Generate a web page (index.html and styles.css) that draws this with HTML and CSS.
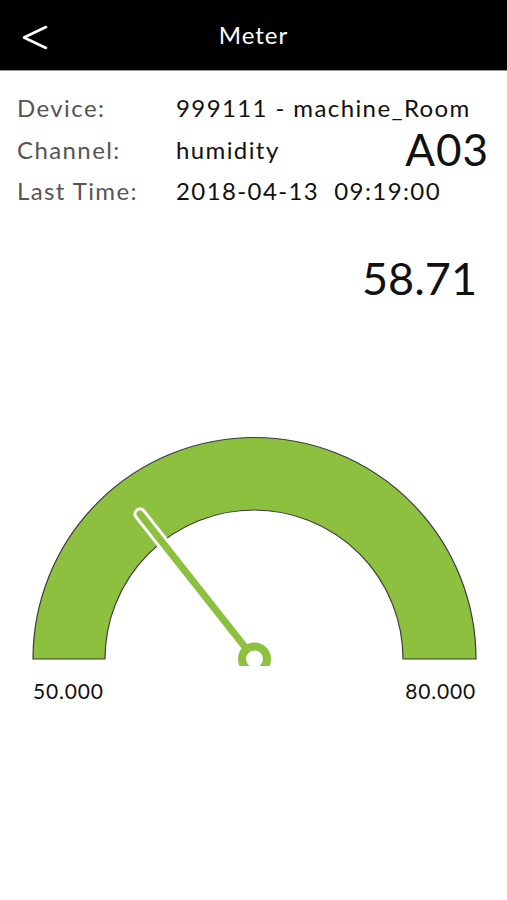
FILE: index.html
```html
<!DOCTYPE html>
<html>
<head>
<meta charset="utf-8">
<link rel="stylesheet" href="styles.css">
</head>
<body>
<header class="topbar">
  <svg class="back" width="30" height="30" viewBox="0 0 30 30"><polyline points="26,3 4,13.5 26,24" fill="none" stroke="#fff" stroke-width="2.6" stroke-linecap="round" stroke-linejoin="round"/></svg>
  <h1 class="title">Meter</h1>
</header>
<section class="info">
  <div class="row"><span class="label">Device:</span><span class="value">999111 - machine_Room</span></div>
  <div class="row"><span class="label">Channel:</span><span class="value grow">humidity</span><span class="code">A03</span></div>
  <div class="row"><span class="label">Last Time:</span><span class="value">2018-04-13&nbsp;&nbsp;09:19:00</span></div>
</section>
<div class="reading">58.71</div>
<svg class="gauge" width="507" height="240" viewBox="0 425 507 240">
  <path d="M33 658 A221.5 221.5 0 0 1 476 658 L403 658 A149 149 0 0 0 105 658 Z" fill="#8dc03f" stroke="#3b3b3b" stroke-width="1.2"/>
  <line x1="254.5" y1="658" x2="140" y2="513" stroke="#ffffff" stroke-width="13" stroke-linecap="round"/>
  <line x1="254.5" y1="658" x2="140" y2="513" stroke="#8dc03f" stroke-width="7" stroke-linecap="round"/>
  <circle cx="254.5" cy="658" r="12.5" fill="#ffffff" stroke="#8dc03f" stroke-width="8"/>
</svg>
<div class="scale"><span>50.000</span><span>80.000</span></div>
</body>
</html>
```
FILE: styles.css
```css
* { box-sizing: border-box; }
html, body { margin: 0; padding: 0; background: #ffffff; }
body { font-family: Lato, "Open Sans", Arial, sans-serif; color: #111; width: 507px; height: 900px; overflow: hidden; }

.topbar {
  height: 71px;
  background: #000;
  border-bottom: 1px solid #9a9a9a;
  display: flex;
  align-items: center;
  justify-content: center;
  position: relative;
}
.back {
  position: absolute;
  left: 20px;
  top: 24px;
}
.title {
  margin: 0;
  color: #fff;
  font-size: 24px;
  font-weight: 400;
  letter-spacing: 1px;
  line-height: 71px;
  transform: translateY(-1px);
}

.info { padding: 16px 17px 0 17px; }
.row { display: flex; line-height: 41.5px; font-size: 24px; height: 41.5px; letter-spacing: 1.4px; }
.label { width: 159px; color: #555; }
.value { color: #111; }
.grow { flex: 1; }
.code { font-size: 44px; color: #111; letter-spacing: 1px; padding-right: 1px; }

.reading {
  margin-top: 38px;
  text-align: right;
  padding-right: 30px;
  font-size: 45px;
  line-height: 56px;
  color: #111;
}

.gauge { display: block; margin-top: 120px; }

.scale {
  display: flex;
  justify-content: space-between;
  padding: 0 31px 0 33px;
  margin-top: 13px;
  font-size: 21px;
  letter-spacing: 0.8px;
  line-height: 24px;
  color: #111;
}
```
